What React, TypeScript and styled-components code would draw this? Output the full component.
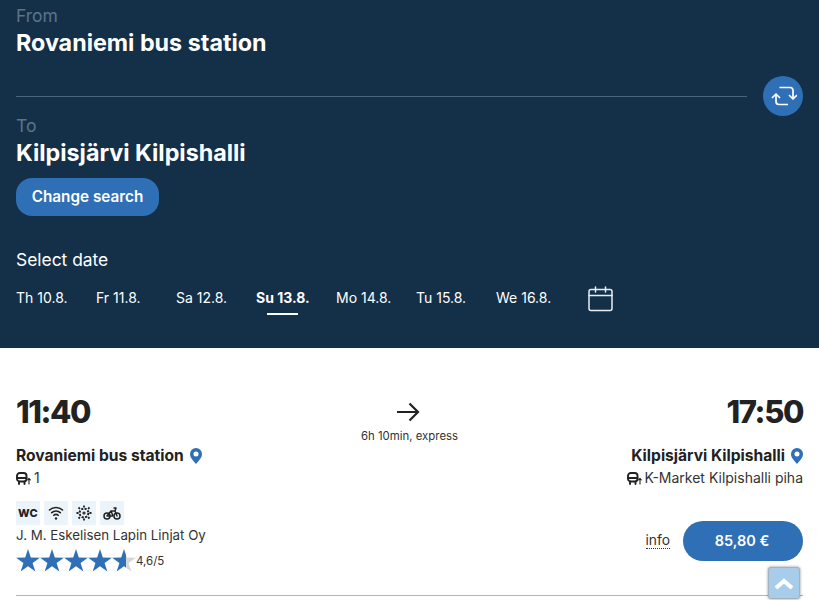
import styled, { createGlobalStyle } from "styled-components";

const GlobalStyle = createGlobalStyle`
  html, body {
    margin: 0;
    padding: 0;
    background: #fff;
    overflow: hidden;
    font-family: "Inter", "Lato", sans-serif;
  }
  * { box-sizing: border-box; }
`;

const Page = styled.div`
  position: relative;
  width: 819px;
  height: 600px;
  overflow: hidden;
`;

const SearchPanel = styled.header`
  height: 348px;
  background: #143049;
  color: #fff;
  padding: 6px 16px 0;
`;

const StopLabel = styled.div`
  font-size: 17.5px;
  line-height: 20px;
  color: #5c7389;
`;

const StopName = styled.h2`
  margin: 2px 0 0;
  font-size: 23.3px;
  line-height: 30px;
  font-weight: 700;
`;

const SwapRow = styled.div`
  display: flex;
  align-items: center;
  gap: 16px;
  height: 40px;
  margin: 18px 0 0;
`;

const Divider = styled.div`
  flex: 1;
  height: 1px;
  background: #4a6580;
`;

const SwapButton = styled.button`
  width: 40px;
  height: 40px;
  border: 0;
  padding: 0;
  border-radius: 50%;
  background: #2f6fb5;
  display: flex;
  align-items: center;
  justify-content: center;
`;

const ChangeButton = styled.button`
  display: block;
  width: 143px;
  height: 38px;
  margin-top: 10px;
  border: 0;
  padding: 0 0 2px;
  border-radius: 16px;
  background: #2f6fb5;
  color: #fff;
  font-family: inherit;
  font-size: 15.3px;
  font-weight: 600;
`;

const DateHeading = styled.div`
  margin-top: 33px;
  font-size: 17.4px;
  line-height: 22px;
`;

const DateRow = styled.div`
  display: grid;
  grid-template-columns: repeat(7, 80px) 24px;
  align-items: start;
  margin-top: 17px;
`;

const DateTab = styled.div<{ $active?: boolean }>`
  position: relative;
  font-size: 14px;
  line-height: 20px;
  font-weight: ${(p) => (p.$active ? 700 : 400)};
  height: 36px;

  ${(p) =>
    p.$active &&
    `&::after {
      content: "";
      position: absolute;
      left: 11px;
      top: 25px;
      width: 31px;
      height: 2px;
      background: #fff;
    }`}
`;

const CalendarSlot = styled.div`
  margin: -2px 0 0 12px;
`;

const Trip = styled.section`
  padding: 46px 16px 0;
  color: #222;
`;

const TimesRow = styled.div`
  display: grid;
  grid-template-columns: 1fr auto 1fr;
  align-items: start;
`;

const Time = styled.div<{ $right?: boolean }>`
  font-size: 31px;
  line-height: 36px;
  font-weight: 800;
  letter-spacing: -1.4px;
  text-align: ${(p) => (p.$right ? "right" : "left")};
`;

const Duration = styled.div`
  display: flex;
  flex-direction: column;
  align-items: center;
  gap: 7px;
  font-size: 11.4px;
  line-height: 14px;
  color: #333;
  padding-top: 8px;
`;

const ArrowSlot = styled.div`
  display: flex;
  margin-right: 4px;
`;

const DetailsRow = styled.div`
  display: flex;
  justify-content: space-between;
  margin-top: 2px;
`;

const Column = styled.div<{ $right?: boolean }>`
  display: flex;
  flex-direction: column;
  align-items: ${(p) => (p.$right ? "flex-end" : "flex-start")};
`;

const PlaceName = styled.div`
  display: flex;
  align-items: center;
  gap: 6px;
  font-size: 15.6px;
  line-height: 22px;
  font-weight: 700;
`;

const Platform = styled.div`
  display: flex;
  align-items: center;
  gap: 3px;
  margin-top: 2px;
  font-size: 14px;
  line-height: 18px;
  color: #333;
`;

const Amenities = styled.div`
  display: flex;
  gap: 4px;
  margin-top: 14px;
`;

const Amenity = styled.div`
  width: 24px;
  height: 24px;
  background: #ecf4fb;
  display: flex;
  align-items: center;
  justify-content: center;
  color: #222;
  font-size: 11px;
  font-weight: 800;
  letter-spacing: 0.3px;
`;

const Operator = styled.div`
  margin-top: 0;
  font-size: 13.3px;
  line-height: 20px;
  color: #333;
`;

const Rating = styled.div`
  display: flex;
  align-items: center;
  gap: 0;
  margin-top: 4px;
  font-size: 11.5px;
  color: #333;
`;

const Stars = styled.div`
  display: flex;
  width: 120px;
`;

const BuyRow = styled.div`
  display: flex;
  align-items: center;
  gap: 13px;
  margin-top: 34px;
`;

const InfoLink = styled.span`
  font-size: 13.8px;
  color: #333;
  border-bottom: 1px dotted #333;
  line-height: 15px;
`;

const PriceButton = styled.button`
  width: 120px;
  height: 40px;
  border: 0;
  padding: 0 2px 2px 0;
  border-radius: 20px;
  background: #2f6fb5;
  color: #fff;
  font-family: inherit;
  font-size: 14.5px;
  font-weight: 600;
`;

const BottomLine = styled.div`
  height: 1px;
  background: #a9b6c4;
  margin-top: 22px;
`;

const ScrollTop = styled.div`
  position: absolute;
  left: 768px;
  top: 567px;
  width: 32px;
  height: 32px;
  background: #a8cdea;
  border: 1px solid #a3b2bf;
  border-radius: 3px;
  box-shadow: 0 0 3px rgba(0, 0, 0, 0.45);
  display: flex;
  align-items: center;
  justify-content: center;
`;

const SwapIcon = () => (
  <svg width="28" height="20" viewBox="0 0 28 20" fill="none" stroke="#fff" strokeWidth="1.7" strokeLinejoin="round">
    <path d="M10.500 1.500H21a3 3 0 0 1 3 3V12.500" />
    <path d="M20 9l4 4 4-4" />
    <path d="M19 18.500H10a3 3 0 0 1-3-3V8" />
    <path d="M3 12l4-4 4 4" />
  </svg>
);

const CalendarIcon = () => (
  <svg width="25" height="26" viewBox="0 0 25 26" fill="none" stroke="#e8edf1" strokeWidth="1.5" strokeLinecap="round">
    <rect x="1" y="3.500" width="23" height="21" rx="2" />
    <path d="M1 9.500h23M7.500 1v5M17.500 1v5" />
  </svg>
);

const Pin = () => (
  <svg width="12" height="16" viewBox="0 0 12 16">
    <path fillRule="evenodd" fill="#2f6fb5" d="M6 0A6 6 0 0 0 0 6c0 4 4 7.500 6 10 2-2.500 6-6 6-10a6 6 0 0 0-6-6Zm0 3.500a2.500 2.500 0 1 1 0 5 2.500 2.500 0 0 1 0-5Z" />
  </svg>
);

const BusIcon = () => (
  <svg width="15" height="13" viewBox="0 0 15 13" fill="none" stroke="#222" strokeWidth="1.900" strokeLinecap="round" strokeLinejoin="round">
    <rect x="1" y="1" width="9.500" height="8.500" rx="2.800" />
    <path d="M1 6h9.500M3 9.500V12M8.500 9.500V12" />
    <path d="M13 12V6.500M11.700 7.800 13 6.500l1.300 1.300" strokeWidth="1.100" />
  </svg>
);

const ArrowIcon = () => (
  <svg width="24" height="20" viewBox="0 0 24 20" fill="none" stroke="#222" strokeWidth="2.200" strokeLinejoin="miter">
    <path d="M1 10h21M13.500 1.500 22 10l-8.500 8.500" />
  </svg>
);

const WifiIcon = () => (
  <svg width="16" height="16" viewBox="0 0 16 16" fill="none" stroke="#222" strokeWidth="1.600" strokeLinecap="round">
    <path d="M1.500 5a9.500 9.500 0 0 1 13 0M3.700 7.700a6.200 6.200 0 0 1 8.600 0M5.800 10.300a3.100 3.100 0 0 1 4.400 0" />
    <circle cx="8" cy="13.500" r="1.200" fill="#222" stroke="none" />
  </svg>
);

const ClimateIcon = () => (
  <svg width="16" height="16" viewBox="0 0 16 16" fill="none" stroke="#222" strokeWidth="2">
    <circle cx="8" cy="8" r="4.400" strokeDasharray="2.200 1.250" />
    <circle cx="8" cy="8" r="1" strokeWidth="1.200" />
    <path strokeWidth="1.800" d="M8 .5v2M8 13.500v2M.5 8h2M13.500 8h2M2.500 2.500l1.400 1.400M12.100 12.100l1.400 1.400M13.500 2.500l-1.400 1.400M3.900 12.100l-1.400 1.400" />
  </svg>
);

const BikeIcon = () => (
  <svg width="18" height="13" viewBox="0 0 18 13" fill="none" stroke="#222" strokeWidth="1.500" strokeLinecap="round" strokeLinejoin="round">
    <circle cx="4" cy="9" r="3" />
    <circle cx="14" cy="9" r="3" />
    <path d="M4 9l4-5h4l2 5M8 4l2 5H4M11 1h2l-1 3" />
  </svg>
);

const ScrollChevron = () => (
  <svg width="20" height="14" viewBox="0 0 20 14" fill="none" stroke="#fff" strokeWidth="4">
    <path d="M2 12l8-7 8 7" />
  </svg>
);

const STAR = "M12 0 14.820 8.620 23.900 8.640 16.560 13.980 19.350 22.600 12 17.300 4.650 22.600 7.440 13.980 0.100 8.640 9.180 8.620Z";

const RatingStar = ({ id, fill }: { id: string; fill: number }) => (
  <svg width="24" height="24" viewBox="0 0 24 24">
    <defs>
      <linearGradient id={id}>
        <stop offset={fill} stopColor="#2f6fb5" />
        <stop offset={fill} stopColor="#d6d6d6" />
      </linearGradient>
    </defs>
    <path d={STAR} fill={`url(#${id})`} />
  </svg>
);

const dates = ["Th 10.8.", "Fr 11.8.", "Sa 12.8.", "Su 13.8.", "Mo 14.8.", "Tu 15.8.", "We 16.8."];
const starFills = [1, 1, 1, 1, 0.6];

export default function App() {
  return (
    <Page>
      <GlobalStyle />
      <SearchPanel>
        <StopLabel>From</StopLabel>
        <StopName>Rovaniemi bus station</StopName>
        <SwapRow>
          <Divider />
          <SwapButton aria-label="Swap">
            <SwapIcon />
          </SwapButton>
        </SwapRow>
        <StopLabel>To</StopLabel>
        <StopName>Kilpisjärvi Kilpishalli</StopName>
        <ChangeButton>Change search</ChangeButton>
        <DateHeading>Select date</DateHeading>
        <DateRow>
          {dates.map((d) => (
            <DateTab key={d} $active={d === "Su 13.8."}>
              {d}
            </DateTab>
          ))}
          <CalendarSlot>
            <CalendarIcon />
          </CalendarSlot>
        </DateRow>
      </SearchPanel>
      <Trip>
        <TimesRow>
          <Time>11:40</Time>
          <Duration>
            <ArrowSlot>
              <ArrowIcon />
            </ArrowSlot>
            <span>6h 10min, express</span>
          </Duration>
          <Time $right>17:50</Time>
        </TimesRow>
        <DetailsRow>
          <Column>
            <PlaceName>
              Rovaniemi bus station <Pin />
            </PlaceName>
            <Platform>
              <BusIcon /> 1
            </Platform>
            <Amenities>
              <Amenity>WC</Amenity>
              <Amenity>
                <WifiIcon />
              </Amenity>
              <Amenity>
                <ClimateIcon />
              </Amenity>
              <Amenity>
                <BikeIcon />
              </Amenity>
            </Amenities>
            <Operator>J. M. Eskelisen Lapin Linjat Oy</Operator>
            <Rating>
              <Stars>
                {starFills.map((f, i) => (
                  <RatingStar key={i} id={`star-${i}`} fill={f} />
                ))}
              </Stars>
              4,6/5
            </Rating>
          </Column>
          <Column $right>
            <PlaceName>
              Kilpisjärvi Kilpishalli <Pin />
            </PlaceName>
            <Platform>
              <BusIcon /> K-Market Kilpishalli piha
            </Platform>
            <BuyRow>
              <InfoLink>info</InfoLink>
              <PriceButton>85,80 €</PriceButton>
            </BuyRow>
          </Column>
        </DetailsRow>
        <BottomLine />
      </Trip>
      <ScrollTop>
        <ScrollChevron />
      </ScrollTop>
    </Page>
  );
}
